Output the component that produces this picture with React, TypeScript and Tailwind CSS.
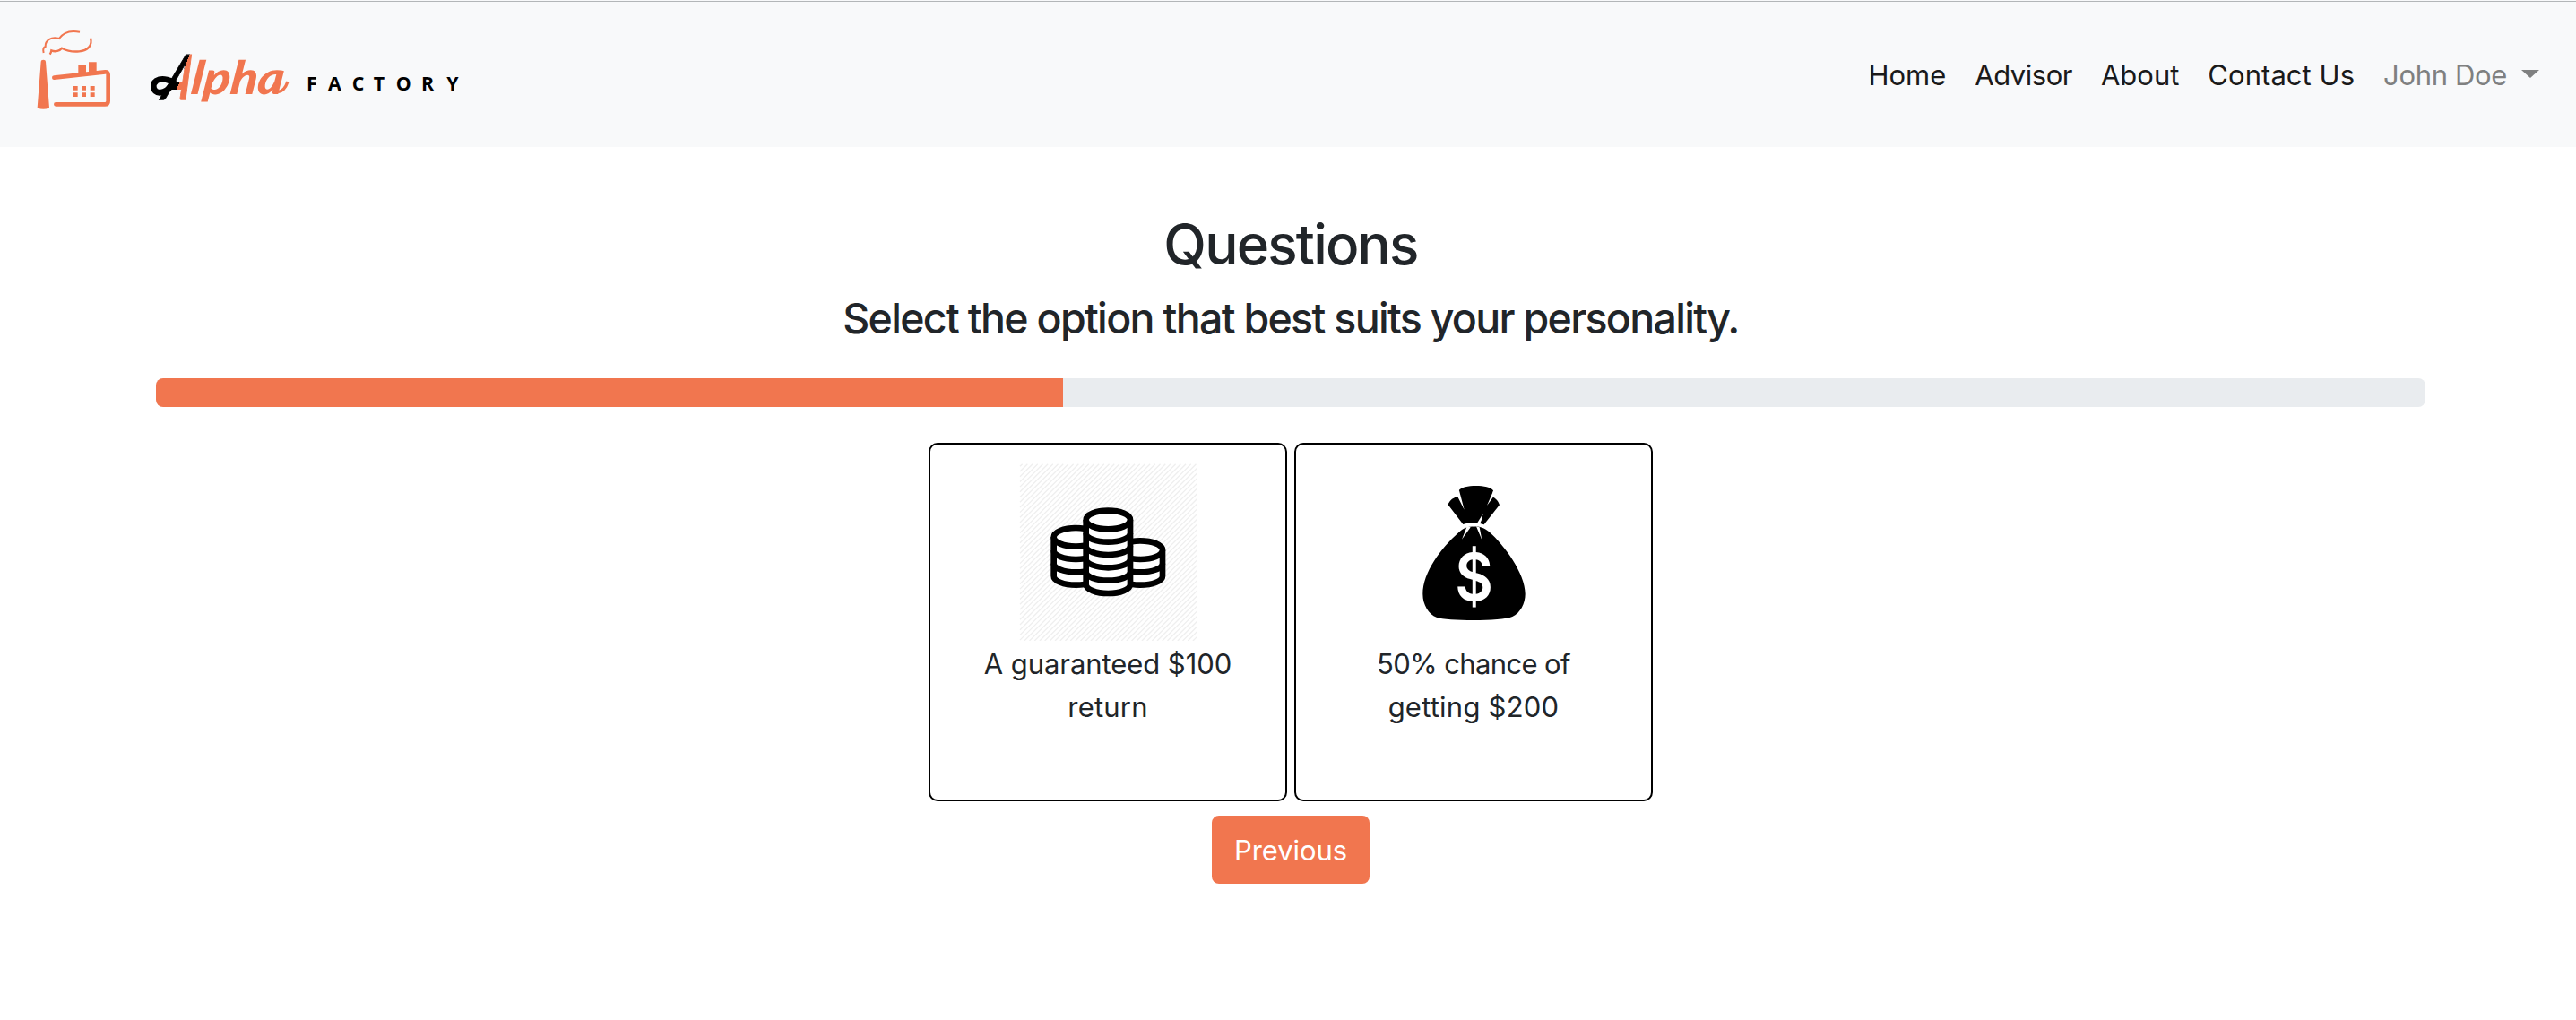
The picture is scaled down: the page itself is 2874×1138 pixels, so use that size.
import type { ReactNode } from 'react';

const ORANGE = '#f1764f';

const HATCH = Array.from({ length: 70 }, (_, i) => {
  const d = 8 + i * 17.1;
  return d <= 592
    ? `M${353 + d},113L353,${113 + d}`
    : `M945,${113 + d - 592}L${353 + d - 592},705`;
}).join('');

function Logo() {
  return (
    <svg className="ml-5 h-41 w-[510px] shrink-0" viewBox="0 0 1530 492" role="img" aria-label="Alpha Factory">
      <defs>
        <linearGradient id="split" gradientUnits="userSpaceOnUse" x1="0" y1="0" x2="100" y2="0">
          <stop offset="0.46" stopColor="#000" />
          <stop offset="0.46" stopColor={ORANGE} />
        </linearGradient>
      </defs>
      <g fill="none" stroke={ORANGE} strokeLinecap="butt">
        <path strokeWidth="6" d="M86,177 C83,165 86,158 92,156 C91,134 112,122 138,129 C152,108 178,101 207,107" />
        <path strokeWidth="7" d="M107,182 Q111,176 112,169 C126,175 140,170 147,161 C165,171 185,174 205,172 C234,169 250,152 243,128" />
        <path strokeWidth="14" strokeLinecap="round" d="M121,260 L292,241 Q302,240 302,250 V338 Q302,349 291,349 H127" />
      </g>
      <g fill={ORANGE}>
        <path d="M77,206 Q77,200 85,200 Q93,200 93,206 L105,361 Q85,370 65,361 Z" />
        <path d="M202,219 H228 V248 H202 Z M237,208 H263 V246 H237 Z" />
        <path d="M185,288h15v14h-15z M213,288h15v14h-15z M242,288h15v14h-15z M185,310h15v14h-15z M213,310h15v14h-15z M242,310h15v14h-15z" />
      </g>
      <path
        fill="none"
        stroke="#000"
        strokeWidth="20"
        strokeLinecap="round"
        d="M535,289 C516,266 482,259 464,270 C447,282 452,309 474,310 C496,310 508,296 520,276"
      />
      <text
        className="font-[Lato] font-black"
        transform="translate(474 332) skewX(-20)"
        fontSize="206"
        textLength="86"
        lengthAdjust="spacingAndGlyphs"
        fill="url(#split)"
        stroke="url(#split)"
        strokeWidth="4"
      >
        A
      </text>
      <text
        className="font-[Lato] font-black italic"
        transform="translate(576 315) skewX(-7)"
        fontSize="154"
        textLength="310"
        lengthAdjust="spacingAndGlyphs"
        fill={ORANGE}
      >
        lpha
      </text>
      <path fill="none" stroke={ORANGE} strokeWidth="10" d="M870,308 C886,306 896,294 903,273" />
      <text
        className="font-['Open_Sans'] font-bold"
        x="966 1038 1118 1190 1265 1350 1435"
        y="303"
        fontSize="64"
        fill="#000"
      >
        FACTORY
      </text>
    </svg>
  );
}

function Coins() {
  return (
    <svg className="size-[199px]" viewBox="350 108 597 597" aria-hidden="true">
      <path d={HATCH} stroke="#efefef" strokeWidth="4" />
      <g fill="none" stroke="#000" strokeWidth="20">
        <path fill="#fff" d="M466,358 A74,31 0 0 1 614,358 V488 A74,30 0 0 1 466,488 Z" />
        <path d="M466,358 A74,31 0 0 0 614,358 M466,403 A74,29 0 0 0 614,403 M466,446 A74,29 0 0 0 614,446" />
        <path fill="#fff" d="M682,401 A74,31 0 0 1 830,401 V488 A74,30 0 0 1 682,488 Z" />
        <path d="M682,401 A74,31 0 0 0 830,401 M682,446 A74,29 0 0 0 830,446" />
        <path fill="#fff" d="M574,300 A74,31 0 0 1 722,300 V516 A74,30 0 0 1 574,516 Z" />
        <path d="M574,300 A74,31 0 0 0 722,300 M574,345 A74,29 0 0 0 722,345 M574,388 A74,29 0 0 0 722,388 M574,431 A74,29 0 0 0 722,431 M574,474 A74,29 0 0 0 722,474" />
      </g>
    </svg>
  );
}

function MoneyBag() {
  return (
    <svg className="size-[199px]" viewBox="345 108 597 597" aria-hidden="true">
      <path d="M593,202 C605,181 695,181 708,202 L704,222 Q724,232 729,250 L677,316 Q641,303 607,315 L556,248 Q566,226 592,221 Z" />
      <path d="M643,323 C620,321 605,331 590,344 C535,392 472,475 472,548 C472,584 492,616 518,626 C555,639 735,640 772,624 C798,612 815,580 815,548 C815,480 745,385 694,340 C675,325 662,322 643,323 Z" />
      <path
        fill="#fff"
        d="M588,200 L594,202 L611,266 L589,223 Z M711,200 L708,203 L687,252 L709,222 Z M674,279 L669,300 L661,318 L652,314 Z M620,322 L632,325 L603,365 Z M651,322 L662,325 L670,367 Z"
      />
      <text x="644" y="569" textAnchor="middle" fontSize="218" textLength="128" lengthAdjust="spacingAndGlyphs" fill="#fff" className="font-[Inter] font-semibold">
        $
      </text>
    </svg>
  );
}

function OptionCard({ icon, children }: { icon: ReactNode; children: ReactNode }) {
  return (
    <button className="flex size-100 flex-col items-center rounded-[10px] border-2 border-black bg-white pt-5 text-[31px] leading-[48px]">
      {icon}
      <span className="mt-0.5">{children}</span>
    </button>
  );
}

export default function App() {
  return (
    <div className="h-[1138px] w-full overflow-hidden bg-white font-[Inter,sans-serif] text-[#212529]">
      <div className="w-[2880px]">
        <header className="flex h-41 items-start justify-between bg-[linear-gradient(#f8f9fa_0_1px,#b3b6b8_1px_2px,#f8f9fa_2px)]">
          <Logo />
          <nav className="flex gap-8 pt-[60px] pr-[47px] text-[31px] leading-[48px] text-[#1a1a1a]">
            <a>Home</a>
            <a className="tracking-[-0.5px]">Advisor</a>
            <a>About</a>
            <a className="tracking-[0.05px]">Contact Us</a>
            <a className="flex items-center text-[#7f8080]">
              <span className="tracking-[-0.35px]">John Doe</span>
              <span className="mb-1 ml-4 border-x-[10px] border-t-[9px] border-x-transparent border-t-[#7f8080]" />
            </a>
          </nav>
        </header>

        <main className="flex flex-col items-center pt-[71px]">
          <h1 className="text-[62px] leading-[76px] font-medium tracking-[-1.8px]">Questions</h1>
          <h2 className="mt-[15px] text-[46.5px] leading-[58px] font-medium tracking-[-1.7px]">
            Select the option that best suits your personality.
          </h2>

          <div className="mt-[38px] flex h-8 w-[2532px] overflow-hidden rounded-lg bg-[#e9ecef]">
            <div className="h-full w-[1012px] bg-[#f1764f]" />
          </div>

          <div className="mt-10 flex gap-2">
            <OptionCard icon={<Coins />}>
              <span className="tracking-[-0.07px]">A guaranteed $100</span>
              <br />
              <span className="tracking-[0.2px]">return</span>
            </OptionCard>
            <OptionCard icon={<MoneyBag />}>
              <span className="tracking-[-0.62px]">50% chance of</span>
              <br />
              <span className="tracking-[0.22px]">getting $200</span>
            </OptionCard>
          </div>

          <button className="mt-4 h-19 w-44 rounded-lg bg-[#f1764f] pt-0.5 text-[31px] leading-[48px] tracking-[-0.1px] text-white">
            Previous
          </button>
        </main>
      </div>
    </div>
  );
}
